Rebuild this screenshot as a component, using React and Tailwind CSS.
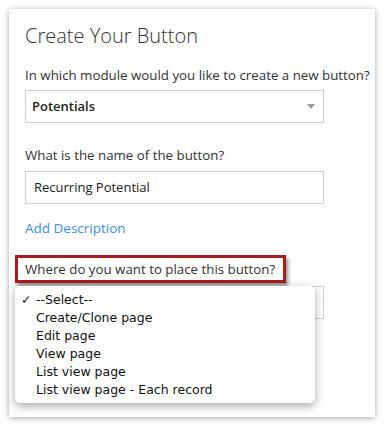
import React from 'react';

const options = [
  '--Select--',
  'Create/Clone page',
  'Edit page',
  'View page',
  'List view page',
  'List view page - Each record',
];

const App = () => {
  return (
    <div className="w-[385px] h-[427px] bg-white p-[9px] pb-[10px] font-['Open_Sans',sans-serif]">
      <div className="h-[408px] w-[366px] bg-white shadow-[0_1px_6px_rgba(0,0,0,0.35)] pl-[16px] pt-[14px]">
        <h1 className="text-[20px] font-light text-[#333] leading-[26px]">Create Your Button</h1>

        <p className="mt-[17px] text-[13.3px] text-[#333] leading-[18px]">
          In which module would you like to create a new button?
        </p>
        <div className="mt-[6px] w-[299px] h-[33px] border border-[#cfcfcf] flex items-center justify-between pl-[6px] pr-[8px]">
          <span className="text-[13px] font-semibold text-[#222]">Potentials</span>
          <span className="w-0 h-0 border-l-[4.5px] border-r-[4.5px] border-t-[5px] border-l-transparent border-r-transparent border-t-[#9a9a9a]"></span>
        </div>

        <p className="mt-[23px] text-[13.3px] text-[#333] leading-[18px]">What is the name of the button?</p>
        <div className="mt-[7px] w-[299px] h-[33px] border border-[#cfcfcf] flex items-center pl-[8px]">
          <span className="text-[13px] text-[#222]">Recurring Potential</span>
        </div>

        <a className="block mt-[15px] text-[13.5px] text-[#3a8ee6] leading-[18px]">Add Description</a>

        <div className="relative">
          <div className="mt-[18px] -ml-[10px] w-[271px] h-[28px] border-[3px] border-[#a51d1d] shadow-[2px_3px_4px_rgba(0,0,0,0.45)] flex items-center pl-[7px]">
            <span className="text-[13.3px] text-[#333] leading-[18px]">Where do you want to place this button?</span>
          </div>
          <div className="mt-[3px] w-[299px] h-[33px] border border-[#cfcfcf]"></div>

          <ul className="absolute left-[-10px] top-[31px] w-[300px] bg-white rounded-[5px] shadow-[0_3px_10px_rgba(0,0,0,0.35)] pt-[5px] pb-[4px] font-['DejaVu_Sans',sans-serif] text-[12.5px] text-[#111]">
            {options.map((o, i) => (
              <li key={i} className="h-[18px] flex items-center pl-[6px]">
                <span className="w-[15px] font-bold">{i === 0 ? '✓' : ''}</span>
                <span>{o}</span>
              </li>
            ))}
          </ul>
        </div>
      </div>
    </div>
  );
};

export default App;
